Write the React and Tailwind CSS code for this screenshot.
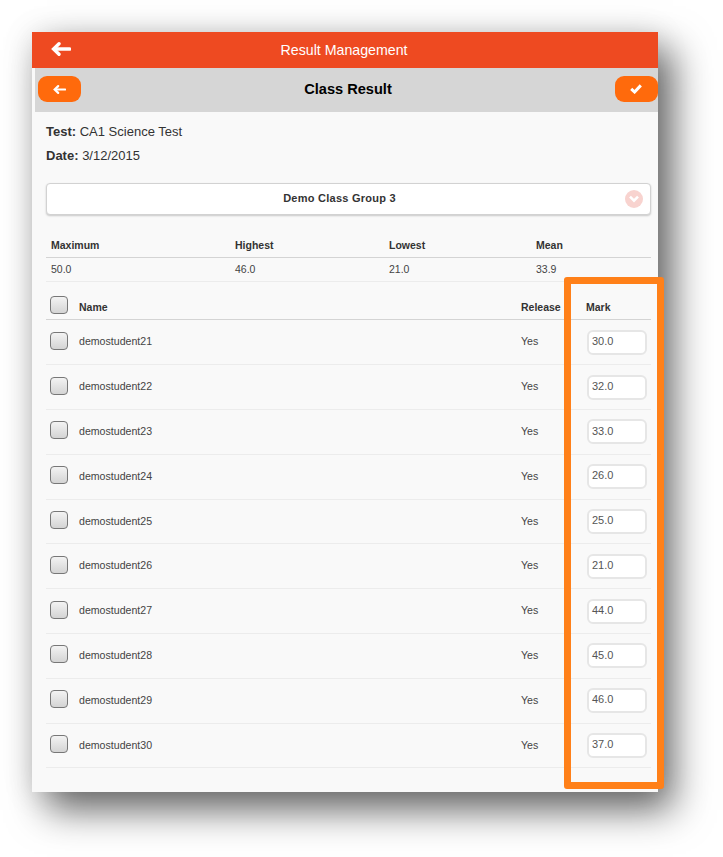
const students = [
  ['demostudent21', '30.0'],
  ['demostudent22', '32.0'],
  ['demostudent23', '33.0'],
  ['demostudent24', '26.0'],
  ['demostudent25', '25.0'],
  ['demostudent26', '21.0'],
  ['demostudent27', '44.0'],
  ['demostudent28', '45.0'],
  ['demostudent29', '46.0'],
  ['demostudent30', '37.0'],
]

const stats = [
  ['Maximum', '50.0', 'w-[184px]'],
  ['Highest', '46.0', 'w-[154px]'],
  ['Lowest', '21.0', 'w-[147px]'],
  ['Mean', '33.9', 'flex-1'],
]

const Checkbox = ({ className = '' }) => (
  <div className={`w-[18px] h-[18px] rounded-[4px] border border-[#777] bg-gradient-to-b from-[#f3f3f3] to-[#d4d4d4] ${className}`} />
)

const ArrowLeft = ({ className }) => (
  <svg viewBox="0 0 20 14" className={className} fill="none" stroke="currentColor" strokeWidth="3.4" strokeLinecap="round" strokeLinejoin="miter">
    <path d="M5 7H18.6" />
    <path d="M8 1.8L2.6 7L8 12.2" />
  </svg>
)

const Check = ({ className }) => (
  <svg viewBox="0 0 12 10" className={className} fill="none" stroke="currentColor" strokeWidth="3" strokeLinejoin="miter">
    <path d="M1.2 4.8L4.6 8L10.8 1.4" />
  </svg>
)

const App = () => {
  return (
    <div className="w-[723px] h-[857px] bg-white pl-8 pt-8 overflow-hidden font-['Liberation_Sans',Arial,sans-serif]">
      <div className="relative w-[626px] h-[760px] bg-[#f9f9f9] shadow-[15px_18px_36px_rgba(0,0,0,0.58),0_2px_30px_rgba(0,0,0,0.12)]">
        {/* Top bar */}
        <div className="relative h-9 bg-[#ee4a21] flex items-center justify-center">
          <ArrowLeft className="absolute left-[19px] top-[10px] w-[20px] h-[14px] text-white" />
          <span className="text-white text-[14.2px] ml-[-2px] mt-[1px]">Result Management</span>
        </div>

        {/* Sub header */}
        <div className="ml-[3px] h-11 bg-[#d6d6d6] flex items-center justify-between pl-[3px] pb-[2px]">
          <button className="w-[43px] h-[26px] rounded-[9px] bg-[#ff6a0c] flex items-center justify-center">
            <ArrowLeft className="w-[13px] h-[11px] text-white" />
          </button>
          <span className="text-[14.6px] font-bold text-black ml-0 mt-[2px]">Class Result</span>
          <button className="w-[43px] h-[26px] rounded-[9px] bg-[#ff6a0c] flex items-center justify-center">
            <Check className="w-[12px] h-[10px] text-white" />
          </button>
        </div>

        <div className="pl-[14px] pr-[7px]">
          <div className="pt-[12px] text-[13px] leading-[16px] text-[#333]">
            <p><b>Test:</b> CA1 Science Test</p>
            <p className="mt-[8px]"><b>Date:</b> 3/12/2015</p>
          </div>

          {/* Class dropdown */}
          <div className="relative mt-[19px] h-8 rounded-[4px] bg-white border border-[#d2d2d2] shadow-[0_1px_2px_rgba(0,0,0,0.2)] flex items-center justify-center">
            <span className="text-[11px] font-bold text-[#333] tracking-[0.25px] ml-[-18px] mt-[-1px]">Demo Class Group 3</span>
            <div className="absolute right-[7px] top-[6px] w-[18px] h-[18px] rounded-full bg-[#f8d3cf] flex items-center justify-center">
              <svg viewBox="0 0 10 8" className="w-[10px] h-[8px] text-white" fill="none" stroke="currentColor" strokeWidth="2.6">
                <path d="M1 1.6L5 5.6L9 1.6" />
              </svg>
            </div>
          </div>

          {/* Summary */}
          <div className="mt-[23px] flex h-[20px] border-b border-[#d4d4d4] pl-[5px] text-[10.5px] font-bold text-[#333]">
            {stats.map(([label, , width]) => (
              <div key={label} className={width}>{label}</div>
            ))}
          </div>
          <div className="flex h-[24px] items-center border-b border-[#ececec] pl-[5px] text-[10.5px] text-[#444]">
            {stats.map(([label, value, width]) => (
              <div key={label} className={width}>{value}</div>
            ))}
          </div>

          {/* Student table */}
          <div className="flex items-end h-[38.4px] pb-[6px] border-b border-[#d4d4d4] pl-1 text-[10.5px] leading-[12px] font-bold text-[#333]">
            <Checkbox className="mb-[-1px]" />
            <span className="ml-[11px] w-[442px]">Name</span>
            <span className="w-[65px]">Release</span>
            <span>Mark</span>
          </div>
          {students.map(([name, mark]) => (
            <div key={name} className="flex items-center h-[44.8px] border-b border-[#ececec] pl-1 text-[10.6px] text-[#444]">
              <Checkbox className="mt-[-3px]" />
              <span className="ml-[11px] w-[442px]">{name}</span>
              <span className="w-[66px]">Yes</span>
              <div className="w-[60px] h-[25px] rounded-[6px] bg-white border-2 border-[#e6e6e6] flex items-center pl-[3px] pb-[2px] text-[#555] text-[11px]">
                {mark}
              </div>
            </div>
          ))}
        </div>

        {/* Highlight frame drawn over the Mark column */}
        <div className="absolute left-[532px] top-[245px] w-[100px] h-[512px] rounded-[3px] border-[7px] border-[#ff8019]" />
      </div>
    </div>
  )
}

export default App
